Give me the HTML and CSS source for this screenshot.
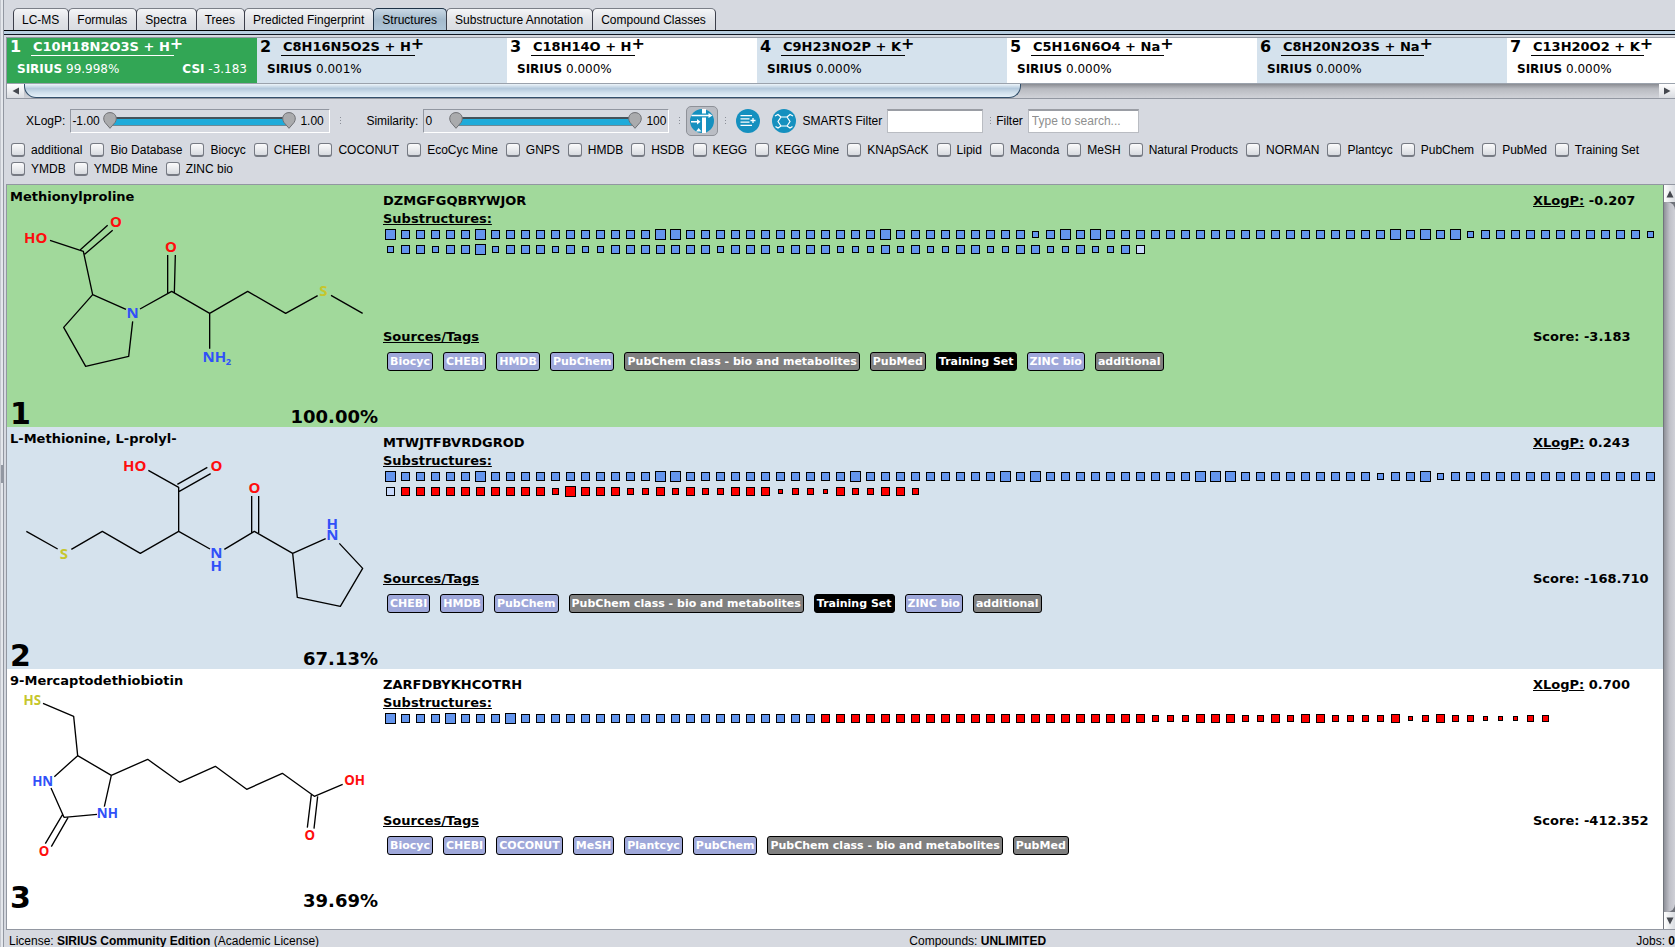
FILE: index.html
```html
<!DOCTYPE html>
<html lang="en">
<head>
<meta charset="utf-8">
<title>SIRIUS - Structures</title>
<link rel="stylesheet" href="styles.css">
</head>
<body>
<div class="app">
  <div class="splitter"><span class="splitter-grip"></span></div>
  <main class="workspace">
    <nav class="tabs" role="tablist">
      <button class="tab" role="tab">LC-MS</button>
      <button class="tab" role="tab">Formulas</button>
      <button class="tab" role="tab">Spectra</button>
      <button class="tab" role="tab">Trees</button>
      <button class="tab" role="tab">Predicted Fingerprint</button>
      <button class="tab tab-active" role="tab" aria-selected="true">Structures</button>
      <button class="tab" role="tab">Substructure Annotation</button>
      <button class="tab" role="tab">Compound Classes</button>
    </nav>
    <div class="tab-line"></div>

    <div class="content">
      <section class="formulas">
        <div class="formula-list">
          <article class="formula formula-selected">
            <div class="formula-top"><b class="formula-no">1</b><span class="formula-name">C10H18N2O3S + H</span><span class="charge">+</span></div>
            <div class="formula-scores"><span><b>SIRIUS</b> 99.998%</span><span><b>CSI</b> -3.183</span></div>
          </article>
          <article class="formula formula-alt">
            <div class="formula-top"><b class="formula-no">2</b><span class="formula-name">C8H16N5O2S + H</span><span class="charge">+</span></div>
            <div class="formula-scores"><span><b>SIRIUS</b> 0.001%</span></div>
          </article>
          <article class="formula">
            <div class="formula-top"><b class="formula-no">3</b><span class="formula-name">C18H14O + H</span><span class="charge">+</span></div>
            <div class="formula-scores"><span><b>SIRIUS</b> 0.000%</span></div>
          </article>
          <article class="formula formula-alt">
            <div class="formula-top"><b class="formula-no">4</b><span class="formula-name">C9H23NO2P + K</span><span class="charge">+</span></div>
            <div class="formula-scores"><span><b>SIRIUS</b> 0.000%</span></div>
          </article>
          <article class="formula">
            <div class="formula-top"><b class="formula-no">5</b><span class="formula-name">C5H16N6O4 + Na</span><span class="charge">+</span></div>
            <div class="formula-scores"><span><b>SIRIUS</b> 0.000%</span></div>
          </article>
          <article class="formula formula-alt">
            <div class="formula-top"><b class="formula-no">6</b><span class="formula-name">C8H20N2O3S + Na</span><span class="charge">+</span></div>
            <div class="formula-scores"><span><b>SIRIUS</b> 0.000%</span></div>
          </article>
          <article class="formula">
            <div class="formula-top"><b class="formula-no">7</b><span class="formula-name">C13H20O2 + K</span><span class="charge">+</span></div>
            <div class="formula-scores"><span><b>SIRIUS</b> 0.000%</span></div>
          </article>
        </div>
        <div class="hscroll">
          <button class="scroll-btn hscroll-btn" aria-label="Scroll left"><svg viewBox="0 0 8 8"><path d="M7 0.5V7.5L0.5 4Z"/></svg></button>
          <div class="hscroll-track"><div class="hscroll-thumb"></div></div>
          <button class="scroll-btn hscroll-btn hscroll-end" aria-label="Scroll right"><svg viewBox="0 0 8 8"><path d="M1 0.5V7.5L7.5 4Z"/></svg></button>
        </div>
      </section>

      <section class="toolbar">
        <span class="range-label">XLogP:</span>
        <div class="range-box">
          <span class="range-min">-1.00</span>
          <div class="range">
            <input type="range" min="0" max="100" value="0" aria-label="XLogP minimum">
            <input type="range" min="0" max="100" value="100" aria-label="XLogP maximum">
          </div>
          <span class="range-max">1.00</span>
        </div>
        <span class="dots"></span>
        <span class="range-label range-label-next">Similarity:</span>
        <div class="range-box range-box-narrow">
          <span class="range-min">0</span>
          <div class="range">
            <input type="range" min="0" max="100" value="0" aria-label="Similarity minimum">
            <input type="range" min="0" max="100" value="100" aria-label="Similarity maximum">
          </div>
          <span class="range-max">100</span>
        </div>
        <span class="dots"></span>
        <button class="icon-btn icon-btn-on" aria-label="Match threshold">
          <svg viewBox="0 0 24 24"><circle cx="12" cy="12" r="12" fill="#1590bf"/><path d="M12 0h4v4.500h-4zM12 8.500h4V24h-4zM1.500 5.700h17V4l4 2.500-4 2.500V7.300h-17zM1 12h6v-2l3.500 2.700L7 15.400v-2H1zM8.700 19l2.700 3.500H6z" fill="#fff"/></svg>
        </button>
        <span class="dots"></span>
        <button class="icon-btn" aria-label="Expand list">
          <svg viewBox="0 0 24 24"><circle cx="12" cy="12" r="12" fill="#1590bf"/><path d="M4.500 6.700H16M4.500 9.900h9M4.500 13.100h9M4.500 16.300H16M17 9v5M14.500 11.500h5" fill="none" stroke="#fff" stroke-width="1.300"/></svg>
        </button>
        <button class="icon-btn icon-btn-last" aria-label="Filter by substructure">
          <svg viewBox="0 0 24 24"><circle cx="12" cy="12" r="12" fill="#1590bf"/><path d="M9 8h6l3 4.500-3 4.500H9l-3-4.500zM9 8L6 5.500 3 7M15 8l3-2.500L21 7M15 17l3 2 2.500-1.500M9 17l-3 2-2.500-1.500" fill="none" stroke="#fff" stroke-width="1.200"/></svg>
        </button>
        <label for="smarts">SMARTS Filter</label>
        <input class="field field-smarts" id="smarts" type="text">
        <span class="dots dots-tight"></span>
        <label for="filter">Filter</label>
        <input class="field field-filter" id="filter" type="text" placeholder="Type to search...">
      </section>

      <section class="databases">
        <label><input type="checkbox">additional</label>
        <label><input type="checkbox">Bio Database</label>
        <label><input type="checkbox">Biocyc</label>
        <label><input type="checkbox">CHEBI</label>
        <label><input type="checkbox">COCONUT</label>
        <label><input type="checkbox">EcoCyc Mine</label>
        <label><input type="checkbox">GNPS</label>
        <label><input type="checkbox">HMDB</label>
        <label><input type="checkbox">HSDB</label>
        <label><input type="checkbox">KEGG</label>
        <label><input type="checkbox">KEGG Mine</label>
        <label><input type="checkbox">KNApSAcK</label>
        <label><input type="checkbox">Lipid</label>
        <label><input type="checkbox">Maconda</label>
        <label><input type="checkbox">MeSH</label>
        <label><input type="checkbox">Natural Products</label>
        <label><input type="checkbox">NORMAN</label>
        <label><input type="checkbox">Plantcyc</label>
        <label><input type="checkbox">PubChem</label>
        <label><input type="checkbox">PubMed</label>
        <label><input type="checkbox">Training Set</label>
        <label><input type="checkbox">YMDB</label>
        <label><input type="checkbox">YMDB Mine</label>
        <label><input type="checkbox">ZINC bio</label>
      </section>

      <section class="results">
        <div class="cards">
          <article class="card card-match">
            <div class="molecule">
              <svg class="drawing" viewBox="21 15 1128 726">
                <path class="bond" d="M150 181L250 214L278 344L378 388M241 209L323 136M254 223L338 151M278 344L191 442L257 559L386 529L398 424M420 387L515 334L629 400L743 334L857 400L953 347M503 225V339M526 225L523 339M629 400V506M993 346L1088 400"/>
                <text class="red" x="107" y="189">HO</text>
                <text class="red" x="348" y="141">O</text>
                <text class="red" x="513" y="215">O</text>
                <text class="blue" x="398" y="413">N</text>
                <text class="blue" x="643" y="547">NH</text>
                <text class="blue sub" x="685" y="555">2</text>
                <text class="yellow" x="970" y="349">S</text>
              </svg>
              <h2 class="mol-name">Methionylproline</h2>
              <span class="rank">1</span><span class="percent">100.00%</span>
            </div>
            <div class="details">
              <div class="summary">
                <div><p class="inchi">DZMGFGQBRYWJOR</p><h3>Substructures:</h3></div>
                <p class="value"><u>XLogP:</u> -0.207</p>
              </div>
              <div class="squares" data-marks="bmmmmmbmmmmmmmmmmmbbmmmmmmmmmmmmmbmmmmmmmmmsmbmbmmmmmmmmmmmmmmmmmmmbmbmbsmmmmmmmmmmmssmmsmmbsmmmsmssmmmmmmmsmmmsmmmsssmsmssmmssmmssmssml"></div>
              <div class="sources">
                <div class="source-head"><h3>Sources/Tags</h3><p class="value">Score: -3.183</p></div>
                <div class="tags"><span class="tag db">Biocyc</span><span class="tag db">CHEBI</span><span class="tag db">HMDB</span><span class="tag db">PubChem</span><span class="tag">PubChem class - bio and metabolites</span><span class="tag">PubMed</span><span class="tag training">Training Set</span><span class="tag db">ZINC bio</span><span class="tag">additional</span></div>
              </div>
            </div>
          </article>

          <article class="card card-alt">
            <div class="molecule">
              <svg class="drawing" viewBox="21 21 1128 726">
                <path class="bond" d="M79 334L173 387M214 388L307 334L421 400L536 334L630 387M536 334V202L445 151M532 193L622 142M538 214L632 161M673 388L763 334L878 400L977 356M755 228V339M776 228V339M878 400L892 532L1021 559L1088 445L1018 370"/>
                <text class="yellow" x="192" y="416">S</text>
                <text class="red" x="404" y="152">HO</text>
                <text class="red" x="649" y="152">O</text>
                <text class="red" x="763" y="218">O</text>
                <text class="blue" x="649" y="415">N</text>
                <text class="blue" x="649" y="452">H</text>
                <text class="blue" x="997" y="361">N</text>
                <text class="blue" x="997" y="326">H</text>
              </svg>
              <h2 class="mol-name">L-Methionine, L-prolyl-</h2>
              <span class="rank">2</span><span class="percent">67.13%</span>
            </div>
            <div class="details">
              <div class="summary">
                <div><p class="inchi">MTWJTFBVRDGROD</p><h3>Substructures:</h3></div>
                <p class="value"><u>XLogP:</u> 0.243</p>
              </div>
              <div class="squares" data-marks="bmmmmmbmmmmmmmmmmmbbmmmmmmmmmmmbmmmmmmmmmbmbmmmmmmmmmmbbbmmmmmmmmmsmmbsmmmmmmmmmmmmmmlMMMMMMMMMMSBMMMSSMSMSSMMMTSSTMSSMMS"></div>
              <div class="sources">
                <div class="source-head"><h3>Sources/Tags</h3><p class="value">Score: -168.710</p></div>
                <div class="tags"><span class="tag db">CHEBI</span><span class="tag db">HMDB</span><span class="tag db">PubChem</span><span class="tag">PubChem class - bio and metabolites</span><span class="tag training">Training Set</span><span class="tag db">ZINC bio</span><span class="tag">additional</span></div>
              </div>
            </div>
          </article>

          <article class="card">
            <div class="molecule">
              <svg class="drawing small-atoms" viewBox="21 27 1128 726">
                <path class="bond" d="M129 130L221 169L233 287L334 346L313 440M233 287L163 350M153 384L192 472L291 463M188 463L136 551M204 473L154 560M334 346L443 298L539 367L646 319L740 388L847 340L943 409L1028 373M934 404L922 503M953 409L942 506"/>
                <text class="yellow" x="97" y="134">HS</text>
                <text class="blue" x="128" y="379">HN</text>
                <text class="blue" x="322" y="474">NH</text>
                <text class="red" x="132" y="588">O</text>
                <text class="red" x="1064" y="376">OH</text>
                <text class="red" x="929" y="541">O</text>
              </svg>
              <h2 class="mol-name">9-Mercaptodethiobiotin</h2>
              <span class="rank">3</span><span class="percent">39.69%</span>
            </div>
            <div class="details">
              <div class="summary">
                <div><p class="inchi">ZARFDBYKHCOTRH</p><h3>Substructures:</h3></div>
                <p class="value"><u>XLogP:</u> 0.700</p>
              </div>
              <div class="squares" data-marks="bmmmbmmmbmmmmmmmmmmmmmmmmmmmmMMMMMMMMMMMMMMMMMMMMMMSSSMMMSSMSMMSSSSMTSMSSTTTSS"></div>
              <div class="sources">
                <div class="source-head"><h3>Sources/Tags</h3><p class="value">Score: -412.352</p></div>
                <div class="tags"><span class="tag db">Biocyc</span><span class="tag db">CHEBI</span><span class="tag db">COCONUT</span><span class="tag db">MeSH</span><span class="tag db">Plantcyc</span><span class="tag db">PubChem</span><span class="tag">PubChem class - bio and metabolites</span><span class="tag">PubMed</span></div>
              </div>
            </div>
          </article>
        </div>
        <div class="vscroll">
          <button class="scroll-btn vscroll-btn" aria-label="Scroll up"><svg viewBox="0 0 8 8"><path d="M0.500 7.500H7.500L4 0.500Z"/></svg></button>
          <div class="vscroll-track"></div>
          <button class="scroll-btn vscroll-btn" aria-label="Scroll down"><svg viewBox="0 0 8 8"><path d="M0.500 0.500H7.500L4 7.500Z"/></svg></button>
        </div>
      </section>
    </div>

    <footer class="status">
      <span>License: <b>SIRIUS Community Edition</b> (Academic License)</span>
      <span>Compounds: <b>UNLIMITED</b></span>
      <span>Jobs: <b>0</b></span>
    </footer>
  </main>
</div>
<script src="squares.js"></script>
</body>
</html>
```

FILE: styles.css
```css
* { box-sizing: border-box; }
body {
  margin: 0;
  background: #d6d9e0;
  color: #000;
  font: 12px/16px "Liberation Sans", Arial, sans-serif;
}
button, input { font: inherit; color: inherit; }
h2, h3, p { margin: 0; font-size: inherit; font-weight: inherit; }

.app { display: flex; height: 100vh; overflow: hidden; }
.splitter {
  flex: none;
  display: flex;
  align-items: center;
  width: 4px;
  border-left: 1px solid #c4c7ce;
  border-right: 1px solid #9297a1;
  background: #e4e7ec;
}
.splitter-grip { width: 2px; height: 18px; background: #9297a1; }
.workspace { flex: 1; min-width: 0; display: flex; flex-direction: column; }

/* tabs */
.tabs { display: flex; padding: 8px 0 0 9px; }
.tab {
  height: 22px;
  margin-right: -1px;
  padding: 0 9px 0 8px;
  border: 1px solid #3c3f4a;
  border-top-color: #7b7f88;
  border-bottom: 0;
  border-radius: 5px 5px 0 0;
  background: linear-gradient(#f4f5f7, #e2e4e8 50%, #d9dce1);
  white-space: nowrap;
}
.tab-active { border-color: #1f3347; background: linear-gradient(#c9d8e5, #a4bacc 50%, #afc5d7); }
.tab-line { flex: none; height: 5px; border-top: 1px solid #000; border-bottom: 1px solid #101722; background: #b8cee0; }

.content { flex: 1; min-height: 0; display: flex; flex-direction: column; padding: 2px 0 0 2px; }

/* formula list */
.formulas { border: 1px solid #9297a1; border-right: 0; }
.formula-list { display: flex; overflow-x: clip; background: #fff; }
.formula {
  flex: none;
  width: 250px;
  height: 45px;
  padding: 0 10px 0 3px;
  font-family: "DejaVu Sans", sans-serif;
}
.formula-alt { background: #d5e2ed; }
.formula-selected { background: #32a655; color: #fff; }
.formula-top { display: flex; height: 23px; }
.formula-no { width: 21px; font-size: 16px; line-height: 18px; }
.formula-name {
  height: 18px;
  padding: 0 4px 0 2px;
  border-bottom: 1px solid currentColor;
  font-size: 13px;
  font-weight: bold;
  line-height: 17px;
}
.charge { margin-left: -4px; font-size: 16px; font-weight: bold; line-height: 11px; }
.formula-scores { display: flex; justify-content: space-between; padding-left: 7px; }

/* scrollbars */
.scroll-btn {
  flex: none;
  display: flex;
  align-items: center;
  justify-content: center;
  padding: 0;
  border: 0;
  background: linear-gradient(#fff, #d9dce1);
}
.scroll-btn svg { width: 8px; height: 8px; fill: #45484f; }
.hscroll { display: flex; height: 15px; border-top: 1px solid #9ba2ac; }
.hscroll-btn { width: 17px; }
.hscroll-end { width: 16px; }
.hscroll-track { flex: 1; background: linear-gradient(#8b8d93, #b9bbc1 35%, #d0d2d8); }
.hscroll-thumb {
  width: 61%;
  height: 14px;
  border: 1px solid #33506c;
  border-top: 0;
  border-radius: 0 0 12px 12px;
  background: linear-gradient(#edf4fa, #b4c9dc 35%, #cfdfec 65%, #e6f1f9);
}
.vscroll { flex: none; display: flex; flex-direction: column; width: 12px; border-left: 1px solid #70747c; background: #6f727a; }
.vscroll-btn { height: 17px; background: linear-gradient(90deg, #fff, #d9dce1); }
.vscroll-track { flex: 1; background: linear-gradient(90deg, #8f9199, #bfc0c8 50%, #cfd0d7); border-radius: 0 8px 8px 0; }

/* toolbar */
.toolbar { display: flex; align-items: center; height: 43px; padding: 0 0 0 20px; white-space: nowrap; }
.range-label { margin-right: 5px; }
.range-label-next { margin-left: 15px; }
.range-box {
  display: flex;
  align-items: center;
  width: 260px;
  height: 24px;
  padding: 0 1px;
  border: 1px solid #9297a1;
  border-right-color: #fff;
  border-bottom-color: #fff;
}
.range-box-narrow { width: 246px; }
.range-box-narrow .range-min { width: 24px; }
.range-box-narrow .range-max { width: 25px; padding-left: 4px; }
.range-min { width: 31px; }
.range-max { width: 32px; padding-left: 4px; }
.range { position: relative; flex: 1; height: 18px; }
.range::before {
  content: "";
  position: absolute;
  inset: 5px 7px auto;
  height: 6px;
  border-top: 2px solid #44525a;
  border-bottom: 1px solid #6d8a96;
  background: #1fabda;
}
.range input {
  position: absolute;
  inset: 0;
  width: 100%;
  height: 18px;
  margin: 0;
  background: none;
  appearance: none;
  pointer-events: none;
}
.range input::-webkit-slider-thumb {
  appearance: none;
  width: 14px;
  height: 17px;
  pointer-events: auto;
  background: url("data:image/svg+xml,%3Csvg xmlns='http://www.w3.org/2000/svg' viewBox='0 0 14 17'%3E%3Cpath d='M7 16.300L2 10.500C-1 6 1.500 .6 7 .6S15 6 12 10.500Z' fill='%23aaabad' stroke='%23707175'/%3E%3C/svg%3E");
}
.dots { width: 1px; height: 7px; margin: 0 10px; background: repeating-linear-gradient(#8b8f98 0 1px, transparent 1px 3px); }
.dots-tight { margin: 0 5px 0 7px; }
.icon-btn { display: flex; padding: 0; margin-right: 12px; border: 0; border-radius: 5px; background: none; }
.icon-btn svg { width: 24px; height: 24px; }
.icon-btn-on { margin: 0 -3px 0 -4px; padding: 2px 3px; border: 1px solid #8e9198; background: #babdc4; }
.icon-btn-last { margin-right: 6px; }
.field {
  height: 24px;
  margin-left: 5px;
  padding: 0 3px;
  border: 1px solid #b9bcc2;
  border-top: 2px solid #9a9da4;
  border-radius: 0;
  background: #fff;
}
.field::placeholder { color: #8e8f8f; opacity: 1; }
.field-smarts { width: 96px; }
.field-filter { width: 111px; }

/* databases */
.databases { display: flex; flex-wrap: wrap; gap: 3px 8px; padding: 0 0 7px 5px; margin-right: 30px; }
.databases label { display: flex; align-items: center; gap: 6px; white-space: nowrap; }
.databases input {
  appearance: none;
  width: 14px;
  height: 14px;
  margin: 0;
  border: 1px solid #767a83;
  border-bottom-width: 2px;
  border-radius: 3px;
  background: linear-gradient(#fbfbfc, #d8dbe0);
}

/* results */
.results { flex: 1; min-height: 0; display: flex; border: 1px solid #9297a1; border-right: 0; background: #fff; }
.cards { flex: 1; min-width: 0; overflow: hidden; font: bold 13px/17px "DejaVu Sans", sans-serif; }
.card { display: flex; height: 242px; }
.card-match { background: #a1d99b; }
.card-alt { background: #d5e2ed; }
.molecule {
  flex: none;
  display: grid;
  grid-template: 1fr auto / 1fr auto;
  align-items: end;
  width: 376px;
  padding: 3px 5px 0 3px;
  position: relative;
}
.drawing { position: absolute; inset: 0; width: 376px; height: 242px; }
.bond { fill: none; stroke: #000; stroke-width: 4; stroke-linejoin: round; }
.drawing text { font: bold 45px "Noto Sans", sans-serif; text-anchor: middle; }
.drawing.small-atoms text { font-size: 40px; }
.drawing .sub { font-size: 28px; }
.red { fill: #ff0d0d; }
.blue { fill: #3050f8; }
.yellow { fill: #c6c62c; }
.mol-name { grid-column: 1 / 3; align-self: start; font-weight: bold; line-height: 18px; }
.rank { font-size: 30px; line-height: 26px; }
.percent { font-size: 18px; line-height: 20px; }

.details { flex: 1; min-width: 0; display: flex; flex-direction: column; padding: 7px 5px 0 0; }
.summary, .source-head { display: flex; justify-content: space-between; align-items: flex-start; }
.summary h3, .source-head h3 { text-decoration: underline; }
.inchi { line-height: 18px; }
.value { width: 125px; }
.squares { display: grid; grid-template-columns: repeat(auto-fill, 15px); grid-auto-rows: 15px; justify-items: center; align-items: center; }
.mark { border: 1px solid #000; background: #6495ed; }
.mark-b { width: 11px; height: 11px; }
.mark-m { width: 9px; height: 9px; }
.mark-s { width: 7px; height: 7px; }
.mark-t { width: 5px; height: 5px; }
.mark-miss { background: #f00; }
.mark-light { background: #c8d9fb; }
.sources { height: 99px; margin-top: auto; }
.tags { display: flex; flex-wrap: wrap; gap: 10px; padding: 7px 4px; }
.tag {
  height: 19px;
  padding: 0 2px;
  border: 1px solid #000;
  border-radius: 3px;
  background: #808080;
  color: #fff;
  font-size: 11px;
  line-height: 17px;
}
.db { background: #9fa8da; }
.training { background: #000; }

/* status bar */
.status { flex: none; display: flex; justify-content: space-between; height: 17px; padding: 3px 0 0 5px; line-height: 16px; white-space: nowrap; }
```

FILE: squares.js
```js
// Each letter is one substructure: b, m, s, t give the size,
// upper case marks a missing one, l a neutral one.
document.querySelectorAll(".squares").forEach(function (row) {
  for (const code of row.dataset.marks) {
    const mark = document.createElement("span");
    const size = code === "l" ? "m" : code.toLowerCase();
    mark.className = "mark mark-" + size;
    if (code === "l") mark.classList.add("mark-light");
    else if (code !== size) mark.classList.add("mark-miss");
    row.append(mark);
  }
});
```
